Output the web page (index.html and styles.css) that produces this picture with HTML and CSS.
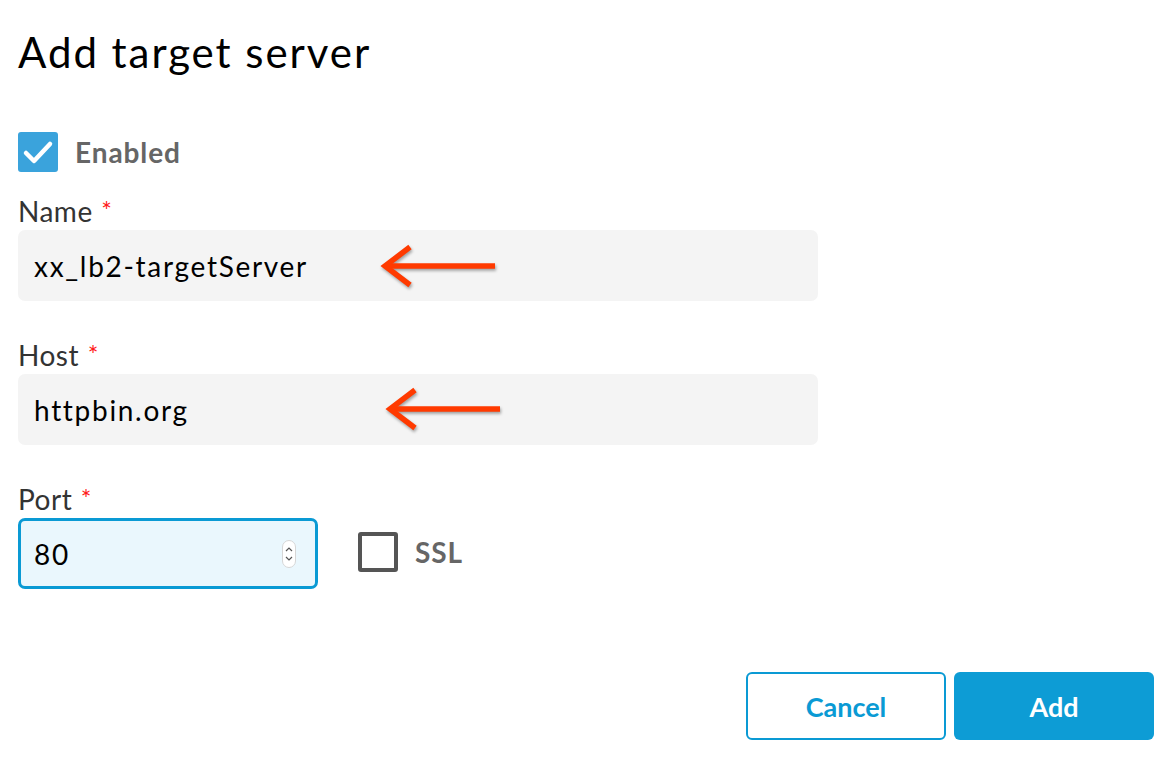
FILE: index.html
```html
<!DOCTYPE html>
<html>
<head>
<meta charset="utf-8">
<link rel="stylesheet" href="styles.css">
</head>
<body>
<div class="dialog">
  <h1 class="title">Add target server</h1>
  <label class="check-row">
    <span class="check checked">
      <svg width="40" height="40" viewBox="0 0 40 40"><path d="M8 21 L16 29 L32 12" fill="none" stroke="#fff" stroke-width="4.5" stroke-linecap="round" stroke-linejoin="round"/></svg>
    </span>
    <span class="check-label">Enabled</span>
  </label>

  <div class="field">
    <div class="label">Name <span class="req">*</span></div>
    <div class="input">
      <span class="value">xx_lb2-targetServer</span>
      <svg class="arrow arrow-name" width="120" height="50" viewBox="0 0 120 50"><g fill="none" stroke="#ff3a00" stroke-width="5.5" stroke-linecap="butt"><path d="M7 25 H116"/><path d="M31 6 L6 25 L31 44"/></g></svg>
    </div>
  </div>

  <div class="field">
    <div class="label">Host <span class="req">*</span></div>
    <div class="input">
      <span class="value">httpbin.org</span>
      <svg class="arrow arrow-host" width="120" height="50" viewBox="0 0 120 50"><g fill="none" stroke="#ff3a00" stroke-width="5.5" stroke-linecap="butt"><path d="M7 25 H116"/><path d="M31 6 L6 25 L31 44"/></g></svg>
    </div>
  </div>

  <div class="field">
    <div class="label">Port <span class="req">*</span></div>
    <div class="port-row">
      <div class="input port">
        <span class="value">80</span>
        <span class="spinner">
          <svg width="14" height="28" viewBox="0 0 14 28"><rect x="0.5" y="0.5" width="13" height="27" rx="6.5" fill="#fff" stroke="#d6d6d6"/><path d="M4 11 L7 8 L10 11 M4 17 L7 20 L10 17" fill="none" stroke="#555" stroke-width="1.2"/></svg>
        </span>
      </div>
      <label class="check-row ssl">
        <span class="check unchecked"></span>
        <span class="check-label">SSL</span>
      </label>
    </div>
  </div>

  <div class="actions">
    <button class="btn btn-outline">Cancel</button>
    <button class="btn btn-primary">Add</button>
  </div>
</div>
</body>
</html>
```
FILE: styles.css
```css
html, body {
  margin: 0;
  padding: 0;
  background: #fff;
}
body {
  font-family: Lato, "Open Sans", sans-serif;
  color: #000;
}
.dialog {
  padding: 22px 22px 0 18px;
  display: flex;
  flex-direction: column;
}
.title {
  margin: 0;
  font-size: 42px;
  font-weight: 400;
  line-height: 60px;
  letter-spacing: 1.95px;
}
.check-row {
  display: flex;
  align-items: center;
  gap: 17px;
}
.dialog > .check-row {
  margin-top: 50px;
}
.check {
  width: 40px;
  height: 40px;
  border-radius: 3px;
  box-sizing: border-box;
  display: block;
}
.check svg { display: block; }
.checked {
  background: #3aa3dc;
}
.unchecked {
  border: 4px solid #555;
}
.check-label {
  font-size: 28px;
  font-weight: 700;
  color: #666;
  letter-spacing: 0.9px;
}
.field {
  display: flex;
  flex-direction: column;
  margin-top: 24px;
}
.field + .field {
  margin-top: 39px;
}
.label {
  font-size: 28px;
  line-height: 30px;
  color: #333;
  letter-spacing: 0.5px;
}
.req {
  color: #ff1a1a;
  font-size: 25px;
  vertical-align: top;
  position: relative;
  top: -1px;
  margin-left: 1px;
}
.input {
  position: relative;
  margin-top: 4px;
  width: 800px;
  height: 71px;
  box-sizing: border-box;
  background: #f4f4f4;
  border-radius: 7px;
  display: flex;
  align-items: center;
  padding-left: 16px;
}
.value {
  font-size: 28px;
  color: #000;
  letter-spacing: 1.7px;
}
.arrow {
  position: absolute;
  filter: drop-shadow(1px 2px 1.5px rgba(0,0,0,0.35));
}
.arrow-name {
  left: 361px;
  top: 11px;
}
.arrow-host {
  left: 366px;
  top: 10px;
}
.port-row {
  display: flex;
  align-items: center;
  margin-top: 4px;
}
.port-row .input {
  margin-top: 0;
}
.input.port {
  width: 300px;
  background: #eaf7fd;
  border: 3px solid #0a9ad4;
  padding-left: 13px;
  justify-content: space-between;
  padding-right: 19px;
}
.spinner svg { display: block; }
.ssl {
  margin-left: 40px;
  position: relative;
  top: -2px;
}
.actions {
  margin-top: 83px;
  display: flex;
  justify-content: flex-end;
  gap: 8px;
}
.btn {
  width: 200px;
  height: 68px;
  border-radius: 6px;
  font-family: Lato, sans-serif;
  font-size: 27px;
  font-weight: 700;
  box-sizing: border-box;
  cursor: pointer;
}
.btn-outline {
  background: #fff;
  border: 2px solid #0a9ad4;
  color: #0a9ad4;
}
.btn-primary {
  background: #0d9cd5;
  border: none;
  color: #fff;
}
```
